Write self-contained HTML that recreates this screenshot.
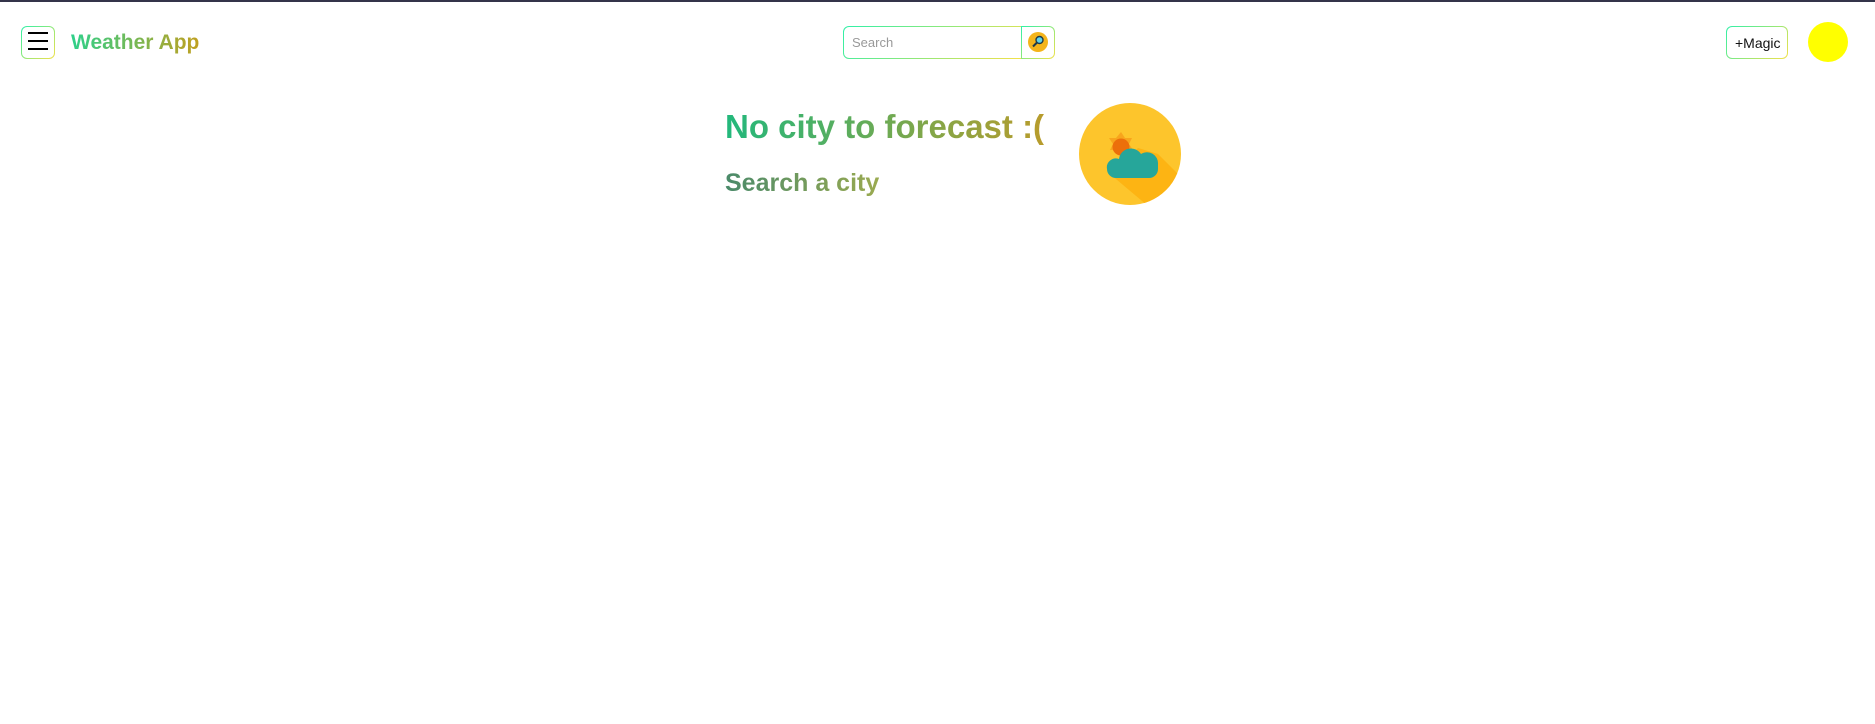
<!DOCTYPE html>
<html><head><style>
body{margin:0;width:1875px;height:724px;background:#fff;border-top:2px solid #34344a;box-sizing:border-box;position:relative;font-family:"Liberation Sans",sans-serif;overflow:hidden}
.gb{position:absolute;border-radius:6px;background:linear-gradient(#fff,#fff) padding-box,linear-gradient(135deg,#2ef0a8,#f3e14a) border-box;border:1.5px solid transparent;box-sizing:border-box}
.gt{background:linear-gradient(90deg,#22b87c,#b89c2c);-webkit-background-clip:text;background-clip:text;color:transparent;font-weight:bold;position:absolute;white-space:nowrap}
</style></head><body>
<div class="gb" style="left:21px;top:24px;width:34px;height:33px">
<div style="position:absolute;left:6px;top:5px;width:20px;height:2px;background:#000"></div>
<div style="position:absolute;left:6px;top:13px;width:20px;height:2px;background:#000"></div>
<div style="position:absolute;left:6px;top:21px;width:20px;height:2px;background:#000"></div>
</div>
<div class="gt" style="left:71px;top:29px;font-size:21px;background:linear-gradient(90deg,#2ed08a,#c0a020);-webkit-background-clip:text;background-clip:text">Weather App</div>
<div class="gb" style="left:843px;top:24px;width:179px;height:33px;border-radius:6px 0 0 6px"><span style="position:absolute;left:8px;top:8px;font:13px 'Liberation Sans',sans-serif;color:#999">Search</span></div>
<div class="gb" style="left:1021px;top:24px;width:34px;height:33px;border-radius:0 6px 6px 0">
<svg width="22" height="22" style="position:absolute;left:5px;top:4px" viewBox="0 0 22 22"><circle cx="11" cy="11" r="10" fill="#f4b41a"/><circle cx="12.5" cy="9" r="3.5" fill="#5fd3e8" stroke="#1d3a4a" stroke-width="1.4"/><line x1="10" y1="11.5" x2="6" y2="15.5" stroke="#1d3a4a" stroke-width="2"/></svg>
</div>
<div class="gt" style="left:725px;top:106px;font-size:33px">No city to forecast :(</div>
<div class="gt" style="left:725px;top:167px;font-size:25px;background:linear-gradient(90deg,#4a8a6a,#9aaa50);-webkit-background-clip:text;background-clip:text">Search a city</div>
<svg width="104" height="104" style="position:absolute;left:1078px;top:100px" viewBox="0 0 104 104">
<defs><clipPath id="c"><circle cx="52" cy="52" r="51"/></clipPath></defs>
<circle cx="52" cy="52" r="51" fill="#fdc52c"/>
<polygon clip-path="url(#c)" points="60,46 80,52 104,76 104,104 70,104 32,72" fill="#fdb413"/>
<polygon points="43,30 47,36 54,36 51,42 55,48 48,48 43,54 39,48 32,48 35,42 31,36 38,36" fill="#f8a51c"/>
<circle cx="43" cy="45" r="8.5" fill="#ec6f0a"/>
<path d="M29 67 a9 9 0 0 1 12-10 a12 12 0 0 1 22-5 a11 11 0 0 1 17 10 v5 a9 9 0 0 1-9 9 h-33 a9 9 0 0 1-9-9z" fill="#26a69a"/>
</svg>
<div class="gb" style="left:1726px;top:24px;width:62px;height:33px"><span style="position:absolute;left:8px;top:8px;font:14px 'Liberation Sans',sans-serif;color:#111">+Magic</span></div>
<div style="position:absolute;left:1808px;top:20px;width:40px;height:40px;border-radius:50%;background:#ffff00"></div>
</body></html>
